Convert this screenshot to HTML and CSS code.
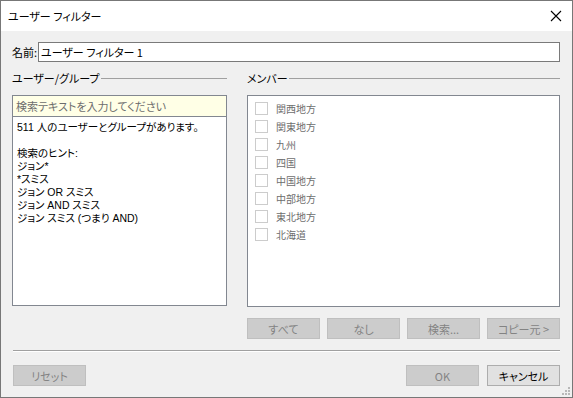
FILE: index.html
```html
<!DOCTYPE html>
<html lang="ja">
<head>
    <meta charset="UTF-8">
    <title>ユーザー フィルター</title>
    <link rel="stylesheet" href="styles.css">
</head>
<body>
    <div class="window">
        <div class="titlebar">
            <span class="title">ユーザー フィルター</span>
            <svg class="close" width="12" height="12" viewBox="0 0 12 12">
                <path d="M1 1 L11 11 M11 1 L1 11" stroke="#000" stroke-width="1.1" fill="none"/>
            </svg>
        </div>

        <div class="content">
            <div class="name-row">
                <label for="name">名前:</label>
                <input id="name" class="name-input" type="text" value="ユーザー フィルター 1">
            </div>

            <div class="columns">
                <div class="column left">
                    <div class="group-header"><span>ユーザー/グループ</span><div class="rule"></div></div>
                    <div class="user-panel">
                        <div class="search">検索テキストを入力してください</div>
                        <div class="user-list">
                            <p>511 人のユーザーとグループがあります。</p>
                            <p>&nbsp;</p>
                            <p>検索のヒント:</p>
                            <p>ジョン*</p>
                            <p>*スミス</p>
                            <p>ジョン OR スミス</p>
                            <p>ジョン AND スミス</p>
                            <p>ジョン スミス (つまり AND)</p>
                        </div>
                    </div>
                </div>

                <div class="column right">
                    <div class="group-header"><span>メンバー</span><div class="rule"></div></div>
                    <div class="member-panel">
                        <div class="member"><span class="check"></span>関西地方</div>
                        <div class="member"><span class="check"></span>関東地方</div>
                        <div class="member"><span class="check"></span>九州</div>
                        <div class="member"><span class="check"></span>四国</div>
                        <div class="member"><span class="check"></span>中国地方</div>
                        <div class="member"><span class="check"></span>中部地方</div>
                        <div class="member"><span class="check"></span>東北地方</div>
                        <div class="member"><span class="check"></span>北海道</div>
                    </div>
                    <div class="member-buttons">
                        <button class="btn" disabled>すべて</button>
                        <button class="btn" disabled>なし</button>
                        <button class="btn" disabled>検索...</button>
                        <button class="btn" disabled>コピー元 &gt;</button>
                    </div>
                </div>
            </div>

            <div class="separator"></div>

            <div class="footer">
                <button class="btn" disabled>リセット</button>
                <div class="footer-right">
                    <button class="btn" disabled>OK</button>
                    <button class="btn active">キャンセル</button>
                </div>
            </div>
        </div>
        <div class="grip">
            <svg width="8" height="8" viewBox="0 0 8 8">
                <rect x="6" y="0" width="2" height="2" fill="#b8b8b8"/>
                <rect x="3" y="3" width="2" height="2" fill="#b8b8b8"/>
                <rect x="6" y="3" width="2" height="2" fill="#b8b8b8"/>
                <rect x="0" y="6" width="2" height="2" fill="#b8b8b8"/>
                <rect x="3" y="6" width="2" height="2" fill="#b8b8b8"/>
                <rect x="6" y="6" width="2" height="2" fill="#b8b8b8"/>
            </svg>
        </div>
    </div>
</body>
</html>
```

FILE: styles.css
```css
* {
    margin: 0;
    padding: 0;
    box-sizing: border-box;
    font-family: 'Noto Sans CJK JP', 'Noto Sans', sans-serif;
    font-feature-settings: "palt";
}

body {
    width: 573px;
    height: 398px;
    overflow: hidden;
    font-size: 11px;
    color: #000;
}

.window {
    position: relative;
    width: 573px;
    height: 398px;
    border: 1px solid #777;
    background-color: #f0f0f0;
    display: flex;
    flex-direction: column;
}

.titlebar {
    height: 30px;
    background-color: #fff;
    display: flex;
    align-items: center;
    justify-content: space-between;
    padding: 0 10px 0 7px;
    flex-shrink: 0;
}

.title {
    font-size: 11px;
}

.content {
    padding: 11px 12px 0 11px;
    display: flex;
    flex-direction: column;
}

.name-row {
    display: flex;
    align-items: center;
    height: 20px;
}

.name-row label {
    width: 26px;
    white-space: nowrap;
    font-size: 11px;
}

.name-input {
    flex: 1;
    height: 20px;
    border: 1px solid #7a7a7a;
    background: #fff;
    font-size: 11px;
    padding: 0 2px;
    outline: none;
}

.columns {
    display: flex;
    gap: 20px;
    margin-top: 9px;
}

.column.left {
    width: 215px;
}

.column.right {
    flex: 1;
}

.group-header {
    display: flex;
    align-items: center;
    height: 14px;
    margin-bottom: 10px;
}

.group-header span {
    white-space: nowrap;
}

.group-header .rule {
    flex: 1;
    height: 1px;
    background-color: #a0a0a0;
    margin-left: 1px;
}

.user-panel {
    height: 211px;
    border: 1px solid #828790;
    background: #fff;
}

.search {
    height: 21px;
    background-color: #ffffe6;
    border-bottom: 1px solid #828790;
    color: #6d6d6d;
    padding-left: 3px;
    line-height: 20px;
}

.user-list {
    padding: 4px 4px;
}

.user-list p {
    height: 13px;
    line-height: 13px;
    font-family: 'Liberation Sans', 'Noto Sans CJK JP', sans-serif;
    font-size: 10.5px;
    white-space: nowrap;
}

.member-panel {
    height: 212px;
    border: 1px solid #828790;
    background: #fff;
    padding-top: 3px;
}

.member {
    display: flex;
    align-items: center;
    height: 18px;
    padding-left: 7px;
    color: #6d6d6d;
    font-size: 10px;
    font-feature-settings: normal;
}

.check {
    width: 13px;
    height: 13px;
    border: 1px solid #cccccc;
    background: #fff;
    margin-right: 8px;
}

.member-buttons {
    display: flex;
    justify-content: flex-end;
    gap: 7px;
    margin-top: 11px;
}

.btn {
    width: 73px;
    height: 21px;
    font-size: 11px;
    background-color: #cccccc;
    border: 1px solid #bfbfbf;
    color: #838383;
}

.btn.active {
    background-color: #e1e1e1;
    border: 1px solid #adadad;
    color: #000;
}

.separator {
    margin-top: 11px;
    height: 2px;
    border-top: 1px solid #a0a0a0;
    border-bottom: 1px solid #fff;
    margin-left: 1px;
}

.footer {
    display: flex;
    justify-content: space-between;
    margin-top: 13px;
    padding-left: 1px;
}

.footer-right {
    display: flex;
    gap: 8px;
}

.grip {
    position: absolute;
    right: 2px;
    bottom: 2px;
    width: 8px;
    height: 8px;
}

.grip svg {
    display: block;
}
```
